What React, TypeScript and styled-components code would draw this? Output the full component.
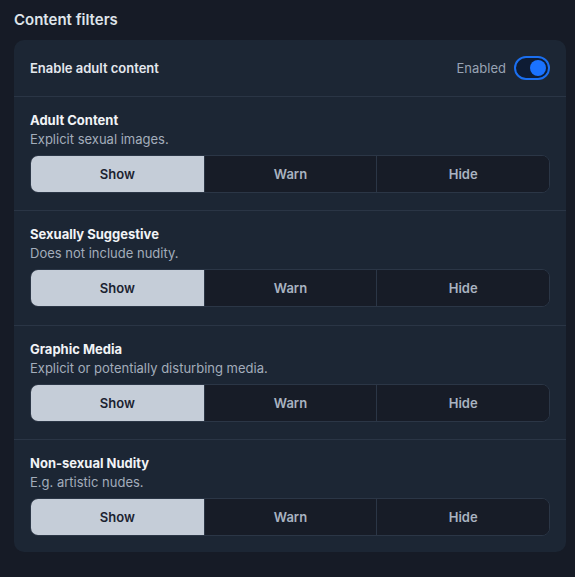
import React, { useState } from 'react';
import styled, { createGlobalStyle } from 'styled-components';

const GlobalStyle = createGlobalStyle`
  html, body {
    margin: 0;
    padding: 0;
    background: #161b26;
    font-family: Inter, "Noto Sans", sans-serif;
    -webkit-font-smoothing: antialiased;
  }
`;

const Page = styled.div`
  padding: 11px 9px 24px 14px;
`;

const Heading = styled.h2`
  margin: 0 0 11px;
  font-size: 15px;
  line-height: 18px;
  font-weight: 600;
  color: #dfe4ea;
`;

const Card = styled.div`
  background: #1c2634;
  border-radius: 10px;
  overflow: hidden;
`;

const HeaderRow = styled.div`
  height: 56px;
  display: flex;
  align-items: center;
  justify-content: space-between;
  padding: 0 16px;
  border-bottom: 1px solid #2a3545;
`;

const HeaderLabel = styled.span`
  font-size: 13px;
  font-weight: 600;
  color: #e4e8ee;
`;

const ToggleWrap = styled.label`
  display: flex;
  align-items: center;
  gap: 8px;
  cursor: pointer;
`;

const ToggleText = styled.span`
  font-size: 13px;
  color: #98a3b3;
`;

const Track = styled.span<{ on: boolean }>`
  box-sizing: border-box;
  width: 36px;
  height: 24px;
  border-radius: 12px;
  border: 2px solid ${p => (p.on ? '#1b6ff0' : '#3a4557')};
  background: ${p => (p.on ? '#0e1c34' : '#161b26')};
  display: flex;
  align-items: center;
  justify-content: ${p => (p.on ? 'flex-end' : 'flex-start')};
  padding: 0 2px;
`;

const Knob = styled.span<{ on: boolean }>`
  width: 16px;
  height: 16px;
  border-radius: 50%;
  background: ${p => (p.on ? '#1a72ff' : '#8893a3')};
`;

const FilterRow = styled.div<{ last?: boolean }>`
  padding: 15px 16px ${p => (p.last ? '16px' : '17.3px')};
  border-bottom: ${p => (p.last ? 'none' : '1px solid #2a3545')};
`;

const FilterTitle = styled.div`
  font-size: 13px;
  line-height: 16px;
  font-weight: 700;
  color: #f1f3f6;
`;

const FilterDesc = styled.div`
  margin-top: 2px;
  font-size: 13px;
  line-height: 18px;
  color: #a3adbb;
`;

const Segmented = styled.div`
  margin-top: 7px;
  display: grid;
  grid-template-columns: repeat(3, 1fr);
  height: 38px;
  box-sizing: border-box;
  border: 1px solid #2b3646;
  border-radius: 8px;
  overflow: hidden;
  background: #171c27;
`;

const Segment = styled.button<{ active: boolean }>`
  border: none;
  border-left: 1px solid #2b3646;
  &:first-child {
    border-left: none;
  }
  background: ${p => (p.active ? '#c5cdd8' : '#171c27')};
  color: ${p => (p.active ? '#1b2230' : '#a9b3c1')};
  font-family: inherit;
  font-size: 13px;
  font-weight: 600;
  cursor: pointer;
  padding: 0;
`;

const filters = [
  { title: 'Adult Content', desc: 'Explicit sexual images.' },
  { title: 'Sexually Suggestive', desc: 'Does not include nudity.' },
  { title: 'Graphic Media', desc: 'Explicit or potentially disturbing media.' },
  { title: 'Non-sexual Nudity', desc: 'E.g. artistic nudes.' },
];

const options = ['Show', 'Warn', 'Hide'];

export default function App() {
  const [enabled, setEnabled] = useState(true);
  const [choices, setChoices] = useState<string[]>(filters.map(() => 'Show'));

  return (
    <Page>
      <GlobalStyle />
      <Heading>Content filters</Heading>
      <Card>
        <HeaderRow>
          <HeaderLabel>Enable adult content</HeaderLabel>
          <ToggleWrap onClick={() => setEnabled(!enabled)}>
            <ToggleText>{enabled ? 'Enabled' : 'Disabled'}</ToggleText>
            <Track on={enabled}>
              <Knob on={enabled} />
            </Track>
          </ToggleWrap>
        </HeaderRow>
        {filters.map((f, i) => (
          <FilterRow key={f.title} last={i === filters.length - 1}>
            <FilterTitle>{f.title}</FilterTitle>
            <FilterDesc>{f.desc}</FilterDesc>
            <Segmented>
              {options.map(o => (
                <Segment
                  key={o}
                  active={choices[i] === o}
                  onClick={() => setChoices(choices.map((c, j) => (j === i ? o : c)))}
                >
                  {o}
                </Segment>
              ))}
            </Segmented>
          </FilterRow>
        ))}
      </Card>
    </Page>
  );
}
